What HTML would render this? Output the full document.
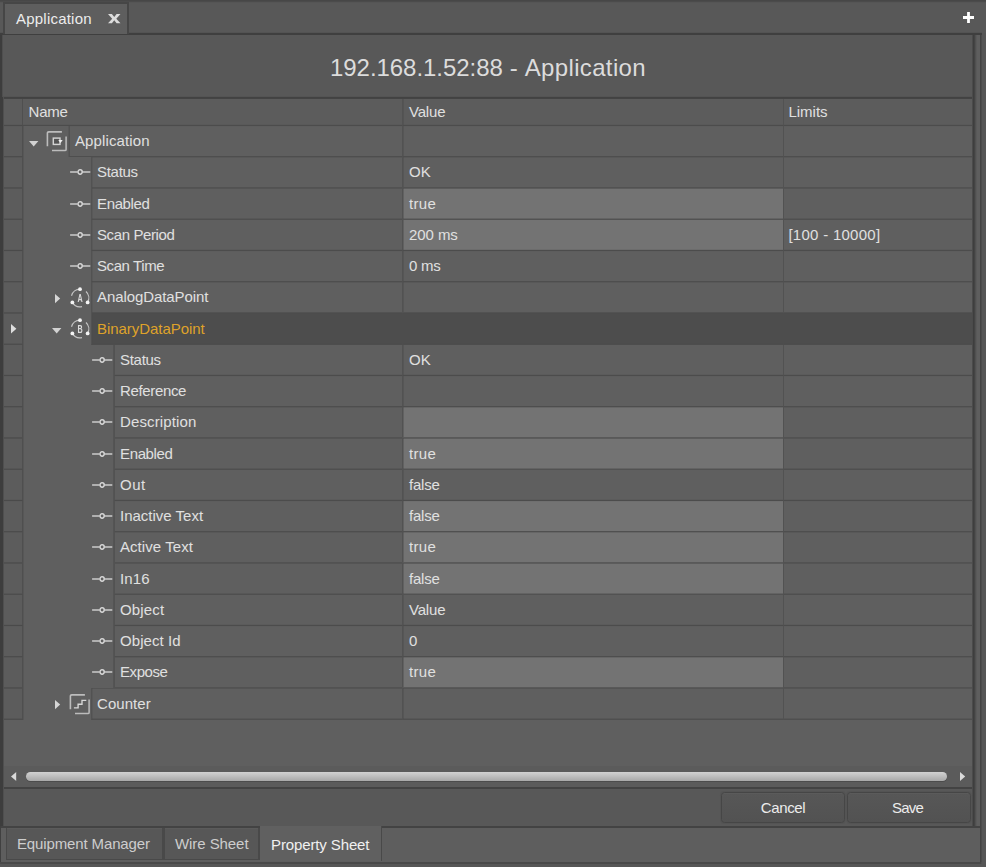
<!DOCTYPE html>
<html lang="en">
<head>
<meta charset="utf-8">
<title>192.168.1.52:88 - Application</title>
<style>
*{box-sizing:border-box;margin:0;padding:0}
html,body{width:986px;height:867px;overflow:hidden;background:#565656}
body{position:relative;font-family:"Liberation Sans",sans-serif;font-size:15px;color:#e0e0e0}
.abs{position:absolute}
#frame{left:0;top:0;width:981px;height:864px;background:#575757;border-right:1px solid #474747;border-bottom:2px solid #494949;box-shadow:1px 0 0 #515151}
#topedge{left:0;top:0;width:986px;height:3px;background:linear-gradient(#474747 33.3%,#4b4b4b 33.3%,#4b4b4b 66.6%,#555 66.6%)}
#tabstrip{left:0;top:0;width:986px;height:33px;background:#585858}
#toptab{left:3px;top:2px;width:126px;height:32px;background:#5e5e5e;border:solid #464646;border-width:2px 2px 0 2px}
#toptab span.t{position:absolute;left:11px;top:6px;font-size:15px;color:#ececec;letter-spacing:.22px}
#plus{left:963px;top:12px;width:11px;height:11px}
#panel{left:0;top:33px;width:975px;height:793px;background:#585858;border-top:2px solid #464646;border-bottom:1px solid #4c4c4c;border-left:2px solid #3d3d3d;border-right:3px solid #474747;}
#topline{left:0;top:32px;width:982px;height:3px;background:linear-gradient(#535353 33.3%,#3f3f3f 33.3%)}
#rstrip{left:972px;top:35px;width:10px;height:827px;background:linear-gradient(90deg,#4b4b4b 0%,#4b4b4b 10%,#3e3e3e 10%,#3e3e3e 20%,#444444 20%,#444444 30%,#505050 30%,#505050 40%,#595959 40%,#595959 50%,#5e5e5e 50%,#5e5e5e 60%,#5e5e5e 60%,#5e5e5e 70%,#5e5e5e 70%,#5e5e5e 80%,#434343 80%,#434343 90%,#4c4c4c 90%,#4c4c4c 100%)}
#title{left:3px;top:36px;width:970px;height:61px;line-height:64px;text-align:center;font-size:24px;color:#dcdcdc;letter-spacing:.05px}
#titleline{left:3px;top:96px;width:969px;height:3px;background:linear-gradient(#545454 33.3%,#424242 33.3%,#424242 66.6%,#444 66.6%)}
#grid{left:3px;top:99px;width:969px;height:667px;background:#5f5f5f;overflow:hidden}
.row{position:absolute;left:0;width:969px;height:31.25px}
.ind{position:absolute;left:0;top:0;width:20px;height:100%;background:#5c5c5c;border-right:1px solid #4f4f4f;border-bottom:1px solid rgba(74,74,74,var(--cb));box-shadow:inset 0 1px 0 rgba(74,74,74,var(--ct)),inset 0 -1px 0 rgba(74,74,74,var(--cc))}
.name{position:absolute;top:0;height:100%;background:#5f5f5f;border-left:1px solid #525252;border-bottom:1px solid rgba(76,76,76,var(--cb));box-shadow:inset 0 1px 0 rgba(76,76,76,var(--ct)),inset 0 -1px 0 rgba(76,76,76,var(--cc));padding-left:5px;line-height:30px;white-space:nowrap;right:570px}
.name::before{content:"";position:absolute;left:calc(var(--vl,0px) * 1 - 1px);top:0;bottom:-1px;width:1px;background:rgba(76,76,76,var(--va,0))}
.hdr .name::before{display:none}
.hdr .name{border-left:none;padding-left:5.6px;letter-spacing:-.27px}
.hdr .val{letter-spacing:-.18px}
.hdr .name,.hdr .val,.hdr .lim{line-height:25px;background:#5c5c5c}
.val{position:absolute;left:399px;top:0;width:381px;height:100%;background:#5f5f5f;border-left:1px solid #525252;border-bottom:1px solid rgba(76,76,76,var(--cb));box-shadow:inset 0 1px 0 rgba(76,76,76,var(--ct)),inset 0 -1px 0 rgba(76,76,76,var(--cc));padding-left:6px;line-height:30px}
.val.ed{background:#737373}
.val::before{content:"";position:absolute;left:0;top:0;bottom:0;width:1px;background:rgba(76,76,76,.45)}
.lim{position:absolute;left:780px;top:0;width:189px;height:100%;background:#5f5f5f;border-left:1px solid #525252;border-bottom:1px solid rgba(76,76,76,var(--cb));box-shadow:inset 0 1px 0 rgba(76,76,76,var(--ct)),inset 0 -1px 0 rgba(76,76,76,var(--cc));padding-left:4.4px;line-height:30px;}
.indent{position:absolute;left:20px;top:0;height:100%;background:#5f5f5f;box-shadow:inset 1px 0 0 rgba(76,76,76,.4)}
.dn .name,.dn .val,.dn .lim{line-height:32px}
.sel .name,.sel .val,.sel .lim{background:#4d4d4d;border-bottom-color:#4d4d4d}
.sel .name{color:#dfa22a}
.sel .val,.sel .lim{border-left-color:#4d4d4d}
.sel .val::before{display:none}
svg{position:absolute;overflow:visible}
#hscroll{left:3px;top:766px;width:969px;height:23px;background:#5b5b5b;border-bottom:2px solid #434343}
#thumb{left:26px;top:772.4px;width:921.3px;height:8.8px;border-radius:4.4px;background:linear-gradient(#d2d2d2,#a8a8a8);box-shadow:0 1px 0 rgba(64,64,64,.55)}
#ledge2{left:0;top:826px;width:1px;height:36px;background:#404040}
#ledge{left:0;top:97px;width:4px;height:729px;background:linear-gradient(90deg,#3d3d3d 75%,#4f4f4f 75%)}
#ledge0{left:0;top:35px;width:3px;height:62px;background:linear-gradient(90deg,#3d3d3d 66.6%,#4f4f4f 66.6%)}
#btnbar{left:3px;top:789px;width:969px;height:37px;background:#585858}
.btn{position:absolute;top:792px;height:31px;border:1px solid #464646;border-radius:3.5px;background:linear-gradient(#575757,#525252);box-shadow:inset 0 1px 0 #5b5b5b,0 0 0 1px rgba(76,76,76,.35);text-align:center;line-height:30px;font-size:15px;color:#ececec}
#bstrip{left:1px;top:826px;width:979px;height:36px;background:#5e5e5e;border-top:2px solid #434343}
.btab{position:absolute;top:828px;height:32px;border:solid #494949;border-width:0 2px 1px 1px;background:#575757;box-shadow:inset 0 1px 0 #5b5b5b;font-size:15px;line-height:31px;color:#cdcdcd;padding-left:10px;white-space:nowrap}
.btab.on{top:826px;height:35px;background:#606060;color:#f0f0f0;border-left:none;border-bottom:none;box-shadow:none;line-height:37px;padding-left:11px;letter-spacing:-.12px}
</style>
</head>
<body>
<div id="frame" class="abs"></div>
<div id="tabstrip" class="abs"></div>
<div id="topedge" class="abs"></div>
<div id="panel" class="abs"></div>
<div id="rstrip" class="abs"></div>
<div id="topline" class="abs"></div>
<div id="toptab" class="abs"><span class="t">Application</span>
<svg style="left:102.8px;top:9.6px" width="12.5" height="9.3" viewBox="0 0 12.5 9.3"><path d="M0 0H3.9L6.25 3L8.6 0H12.5L8.3 4.65L12.5 9.3H8.6L6.25 6.3L3.9 9.3H0L4.2 4.65Z" fill="#dcdcdc"/></svg>
</div>
<svg id="plus" class="abs" viewBox="0 0 11 11"><path d="M5.5 0V11M0 5.5H11" stroke="#fff" stroke-width="2.8" fill="none"/></svg>
<div id="title" class="abs"><span style="letter-spacing:-.05px">192.168.1.52:88</span><span style="letter-spacing:.2px"> - </span><span style="letter-spacing:.35px">Application</span></div>
<div id="titleline" class="abs"></div>
<div id="grid" class="abs">
<div class="row hdr" style="top:0;height:27px;--ct:0;--cb:1;--cc:.15"><div class="ind"></div><div class="name" style="left:20px">Name</div><div class="val">Value</div><div class="lim">Limits</div></div>
<div class="row" style="top:27px;height:31px;--ct:0.10;--cb:0.90;--cc:0.00"><div class="ind"></div><div class="indent" style="width:46px"><svg style="left:6.2px;top:14.9px" width="9.4" height="5.4" viewBox="0 0 9.4 5.4"><path d="M0 0H9.4L4.7 5.4Z" fill="#d2d2d2"/></svg><svg style="left:23px;top:5.1px" width="22" height="21" viewBox="0 0 22 21"><path d="M1.4 15.3V2.2Q1.4 0.85 2.8 0.85H15.9" stroke="#bcbcbc" stroke-width="1.6" fill="none"/><path d="M20.1 5.5V18.4Q20.1 19.5 19 19.5H6" stroke="#bcbcbc" stroke-width="1.5" fill="none"/><rect x="7.3" y="7.1" width="6.7" height="6.3" stroke="#d2d2d2" stroke-width="1.45" fill="#545454"/><path d="M12.3 9.1H16.7L14.5 12.1Z" fill="#f0f0f0"/></svg></div><div class="name" style="left:66px;letter-spacing:0.12px;--vl:-1px;--va:.35">Application</div><div class="val"></div><div class="lim"></div></div>
<div class="row" style="top:58px;height:31px;--ct:0.35;--cb:0.65;--cc:0.00"><div class="ind"></div><div class="indent" style="width:68px"><svg style="left:46.7px;top:11.35px" width="21" height="8" viewBox="0 0 21 8"><path d="M0.1 4H7.4M12.8 4H20.3" stroke="#b0b0b0" stroke-width="1.8" fill="none"/><circle cx="10.1" cy="4" r="2.15" stroke="#d8d8d8" stroke-width="1.5" fill="none"/></svg></div><div class="name" style="left:88px;letter-spacing:-0.29px;--vl:1px;--va:.3">Status</div><div class="val" style="letter-spacing:0.14px">OK</div><div class="lim"></div></div>
<div class="row dn" style="top:89px;height:32px;--ct:0.60;--cb:0.85;--cc:0.40"><div class="ind"></div><div class="indent" style="width:68px"><svg style="left:46.7px;top:11.6px" width="21" height="8" viewBox="0 0 21 8"><path d="M0.1 4H7.4M12.8 4H20.3" stroke="#b0b0b0" stroke-width="1.8" fill="none"/><circle cx="10.1" cy="4" r="2.15" stroke="#d8d8d8" stroke-width="1.5" fill="none"/></svg></div><div class="name" style="left:88px;letter-spacing:-0.36px;--vl:1px;--va:.3">Enabled</div><div class="val ed" style="letter-spacing:0.32px">true</div><div class="lim"></div></div>
<div class="row" style="top:121px;height:31px;--ct:0.00;--cb:1.00;--cc:0.15"><div class="ind"></div><div class="indent" style="width:68px"><svg style="left:46.7px;top:10.85px" width="21" height="8" viewBox="0 0 21 8"><path d="M0.1 4H7.4M12.8 4H20.3" stroke="#b0b0b0" stroke-width="1.8" fill="none"/><circle cx="10.1" cy="4" r="2.15" stroke="#d8d8d8" stroke-width="1.5" fill="none"/></svg></div><div class="name" style="left:88px;letter-spacing:-0.39px;--vl:1px;--va:.3">Scan Period</div><div class="val ed" style="letter-spacing:-0.07px">200 ms</div><div class="lim" style="letter-spacing:0.28px">[100 - 10000]</div></div>
<div class="row" style="top:152px;height:31px;--ct:0.10;--cb:0.90;--cc:0.00"><div class="ind"></div><div class="indent" style="width:68px"><svg style="left:46.7px;top:11.1px" width="21" height="8" viewBox="0 0 21 8"><path d="M0.1 4H7.4M12.8 4H20.3" stroke="#b0b0b0" stroke-width="1.8" fill="none"/><circle cx="10.1" cy="4" r="2.15" stroke="#d8d8d8" stroke-width="1.5" fill="none"/></svg></div><div class="name" style="left:88px;letter-spacing:-0.41px;--vl:1px;--va:.3">Scan Time</div><div class="val" style="letter-spacing:-0.28px">0 ms</div><div class="lim"></div></div>
<div class="row" style="top:183px;height:31px;--ct:0.35;--cb:0.65;--cc:0.00"><div class="ind"></div><div class="indent" style="width:68px"><svg style="left:31.6px;top:11.75px" width="5.2" height="9.2" viewBox="0 0 5.2 9.2"><path d="M0 0V9.2L5.2 4.6Z" fill="#d6d6d6"/></svg><svg style="left:45.75px;top:4.75px" width="22" height="22" viewBox="0 0 22 22"><path d="M11.00 2.20A8.8 8.8 0 0 0 2.50 8.72M3.38 15.40A8.8 8.8 0 0 0 12.98 19.57M18.62 15.40A8.8 8.8 0 0 0 17.00 4.56" stroke="#c4c4c4" stroke-width="1.2" fill="none"/><circle cx="11.00" cy="2.20" r="1.9" fill="#f4f4f4"/><circle cx="3.38" cy="15.40" r="1.9" fill="#f4f4f4"/><circle cx="18.62" cy="15.40" r="1.9" fill="#f4f4f4"/><text transform="translate(11 14.7) scale(.72 1)" text-anchor="middle" font-family="Liberation Sans, sans-serif" font-size="10" font-weight="bold" fill="#dcdcdc" style="filter:grayscale(1)">A</text></svg></div><div class="name" style="left:88px;letter-spacing:-0.09px;--vl:1px;--va:.3">AnalogDataPoint</div><div class="val"></div><div class="lim"></div></div>
<div class="row sel dn" style="top:214px;height:32px;--ct:0.60;--cb:0.85;--cc:0.40"><div class="ind"><svg style="left:7.8px;top:10.8px" width="5.4" height="9.6" viewBox="0 0 5.4 9.6"><path d="M0 0V9.6L5.4 4.8Z" fill="#dedede"/></svg></div><div class="indent" style="width:68px"><svg style="left:28.7px;top:15.4px" width="9.4" height="5.4" viewBox="0 0 9.4 5.4"><path d="M0 0H9.4L4.7 5.4Z" fill="#d2d2d2"/></svg><svg style="left:45.75px;top:5px" width="22" height="22" viewBox="0 0 22 22"><path d="M11.00 2.20A8.8 8.8 0 0 0 2.50 8.72M3.38 15.40A8.8 8.8 0 0 0 12.98 19.57M18.62 15.40A8.8 8.8 0 0 0 17.00 4.56" stroke="#c4c4c4" stroke-width="1.2" fill="none"/><circle cx="11.00" cy="2.20" r="1.9" fill="#f4f4f4"/><circle cx="3.38" cy="15.40" r="1.9" fill="#f4f4f4"/><circle cx="18.62" cy="15.40" r="1.9" fill="#f4f4f4"/><text transform="translate(11 14.7) scale(.72 1)" text-anchor="middle" font-family="Liberation Sans, sans-serif" font-size="10" font-weight="bold" fill="#dcdcdc" style="filter:grayscale(1)">B</text></svg></div><div class="name" style="left:88px;letter-spacing:-0.05px;--vl:1px;--va:.3">BinaryDataPoint</div><div class="val"></div><div class="lim"></div></div>
<div class="row" style="top:246px;height:31px;--ct:0.00;--cb:1.00;--cc:0.15"><div class="ind"></div><div class="indent" style="width:91px"><svg style="left:69.2px;top:10.85px" width="21" height="8" viewBox="0 0 21 8"><path d="M0.1 4H7.4M12.8 4H20.3" stroke="#b0b0b0" stroke-width="1.8" fill="none"/><circle cx="10.1" cy="4" r="2.15" stroke="#d8d8d8" stroke-width="1.5" fill="none"/></svg></div><div class="name" style="left:111px;letter-spacing:-0.29px;--vl:-1px;--va:.6">Status</div><div class="val" style="letter-spacing:0.14px">OK</div><div class="lim"></div></div>
<div class="row" style="top:277px;height:31px;--ct:0.10;--cb:0.90;--cc:0.00"><div class="ind"></div><div class="indent" style="width:91px"><svg style="left:69.2px;top:11.1px" width="21" height="8" viewBox="0 0 21 8"><path d="M0.1 4H7.4M12.8 4H20.3" stroke="#b0b0b0" stroke-width="1.8" fill="none"/><circle cx="10.1" cy="4" r="2.15" stroke="#d8d8d8" stroke-width="1.5" fill="none"/></svg></div><div class="name" style="left:111px;letter-spacing:-0.35px;--vl:-1px;--va:.6">Reference</div><div class="val"></div><div class="lim"></div></div>
<div class="row" style="top:308px;height:31px;--ct:0.35;--cb:0.65;--cc:0.00"><div class="ind"></div><div class="indent" style="width:91px"><svg style="left:69.2px;top:11.35px" width="21" height="8" viewBox="0 0 21 8"><path d="M0.1 4H7.4M12.8 4H20.3" stroke="#b0b0b0" stroke-width="1.8" fill="none"/><circle cx="10.1" cy="4" r="2.15" stroke="#d8d8d8" stroke-width="1.5" fill="none"/></svg></div><div class="name" style="left:111px;letter-spacing:0.12px;--vl:-1px;--va:.6">Description</div><div class="val ed"></div><div class="lim"></div></div>
<div class="row dn" style="top:339px;height:32px;--ct:0.60;--cb:0.85;--cc:0.40"><div class="ind"></div><div class="indent" style="width:91px"><svg style="left:69.2px;top:11.6px" width="21" height="8" viewBox="0 0 21 8"><path d="M0.1 4H7.4M12.8 4H20.3" stroke="#b0b0b0" stroke-width="1.8" fill="none"/><circle cx="10.1" cy="4" r="2.15" stroke="#d8d8d8" stroke-width="1.5" fill="none"/></svg></div><div class="name" style="left:111px;letter-spacing:-0.36px;--vl:-1px;--va:.6">Enabled</div><div class="val ed" style="letter-spacing:0.32px">true</div><div class="lim"></div></div>
<div class="row" style="top:371px;height:31px;--ct:0.00;--cb:1.00;--cc:0.15"><div class="ind"></div><div class="indent" style="width:91px"><svg style="left:69.2px;top:10.85px" width="21" height="8" viewBox="0 0 21 8"><path d="M0.1 4H7.4M12.8 4H20.3" stroke="#b0b0b0" stroke-width="1.8" fill="none"/><circle cx="10.1" cy="4" r="2.15" stroke="#d8d8d8" stroke-width="1.5" fill="none"/></svg></div><div class="name" style="left:111px;letter-spacing:0.49px;--vl:-1px;--va:.6">Out</div><div class="val" style="letter-spacing:-0.21px">false</div><div class="lim"></div></div>
<div class="row" style="top:402px;height:31px;--ct:0.10;--cb:0.90;--cc:0.00"><div class="ind"></div><div class="indent" style="width:91px"><svg style="left:69.2px;top:11.1px" width="21" height="8" viewBox="0 0 21 8"><path d="M0.1 4H7.4M12.8 4H20.3" stroke="#b0b0b0" stroke-width="1.8" fill="none"/><circle cx="10.1" cy="4" r="2.15" stroke="#d8d8d8" stroke-width="1.5" fill="none"/></svg></div><div class="name" style="left:111px;;--vl:-1px;--va:.6">Inactive Text</div><div class="val ed" style="letter-spacing:-0.21px">false</div><div class="lim"></div></div>
<div class="row" style="top:433px;height:31px;--ct:0.35;--cb:0.65;--cc:0.00"><div class="ind"></div><div class="indent" style="width:91px"><svg style="left:69.2px;top:11.35px" width="21" height="8" viewBox="0 0 21 8"><path d="M0.1 4H7.4M12.8 4H20.3" stroke="#b0b0b0" stroke-width="1.8" fill="none"/><circle cx="10.1" cy="4" r="2.15" stroke="#d8d8d8" stroke-width="1.5" fill="none"/></svg></div><div class="name" style="left:111px;letter-spacing:0.06px;--vl:-1px;--va:.6">Active Text</div><div class="val ed" style="letter-spacing:0.32px">true</div><div class="lim"></div></div>
<div class="row dn" style="top:464px;height:32px;--ct:0.60;--cb:0.85;--cc:0.40"><div class="ind"></div><div class="indent" style="width:91px"><svg style="left:69.2px;top:11.6px" width="21" height="8" viewBox="0 0 21 8"><path d="M0.1 4H7.4M12.8 4H20.3" stroke="#b0b0b0" stroke-width="1.8" fill="none"/><circle cx="10.1" cy="4" r="2.15" stroke="#d8d8d8" stroke-width="1.5" fill="none"/></svg></div><div class="name" style="left:111px;letter-spacing:0.17px;--vl:-1px;--va:.6">In16</div><div class="val ed" style="letter-spacing:-0.21px">false</div><div class="lim"></div></div>
<div class="row" style="top:496px;height:31px;--ct:0.00;--cb:1.00;--cc:0.15"><div class="ind"></div><div class="indent" style="width:91px"><svg style="left:69.2px;top:10.85px" width="21" height="8" viewBox="0 0 21 8"><path d="M0.1 4H7.4M12.8 4H20.3" stroke="#b0b0b0" stroke-width="1.8" fill="none"/><circle cx="10.1" cy="4" r="2.15" stroke="#d8d8d8" stroke-width="1.5" fill="none"/></svg></div><div class="name" style="left:111px;letter-spacing:0.16px;--vl:-1px;--va:.6">Object</div><div class="val" style="letter-spacing:-0.18px">Value</div><div class="lim"></div></div>
<div class="row" style="top:527px;height:31px;--ct:0.10;--cb:0.90;--cc:0.00"><div class="ind"></div><div class="indent" style="width:91px"><svg style="left:69.2px;top:11.1px" width="21" height="8" viewBox="0 0 21 8"><path d="M0.1 4H7.4M12.8 4H20.3" stroke="#b0b0b0" stroke-width="1.8" fill="none"/><circle cx="10.1" cy="4" r="2.15" stroke="#d8d8d8" stroke-width="1.5" fill="none"/></svg></div><div class="name" style="left:111px;letter-spacing:0.06px;--vl:-1px;--va:.6">Object Id</div><div class="val" style="letter-spacing:0.36px">0</div><div class="lim"></div></div>
<div class="row" style="top:558px;height:31px;--ct:0.35;--cb:0.65;--cc:0.00"><div class="ind"></div><div class="indent" style="width:91px"><svg style="left:69.2px;top:11.35px" width="21" height="8" viewBox="0 0 21 8"><path d="M0.1 4H7.4M12.8 4H20.3" stroke="#b0b0b0" stroke-width="1.8" fill="none"/><circle cx="10.1" cy="4" r="2.15" stroke="#d8d8d8" stroke-width="1.5" fill="none"/></svg></div><div class="name" style="left:111px;letter-spacing:-0.43px;--vl:-1px;--va:.6">Expose</div><div class="val ed" style="letter-spacing:0.32px">true</div><div class="lim"></div></div>
<div class="row dn" style="top:589px;height:32px;--ct:0.60;--cb:0.85;--cc:0.40"><div class="ind"></div><div class="indent" style="width:68px"><svg style="left:31.6px;top:12px" width="5.2" height="9.2" viewBox="0 0 5.2 9.2"><path d="M0 0V9.2L5.2 4.6Z" fill="#d6d6d6"/></svg><svg style="left:45.5px;top:5.6px" width="22" height="21" viewBox="0 0 22 21"><path d="M1.4 15.3V2.2Q1.4 0.85 2.8 0.85H15.9" stroke="#bcbcbc" stroke-width="1.6" fill="none"/><path d="M20.1 5.5V18.4Q20.1 19.5 19 19.5H6" stroke="#bcbcbc" stroke-width="1.5" fill="none"/><path d="M4.9 13.9H9.1V10.2H13V6.4H17.3" stroke="#d8d8d8" stroke-width="1.35" fill="none"/></svg></div><div class="name" style="left:88px;letter-spacing:0.05px;--vl:1px;--va:.3">Counter</div><div class="val"></div><div class="lim"></div></div>
</div>
<div id="hscroll" class="abs"></div>
<div id="thumb" class="abs"></div>
<svg class="abs" style="left:11px;top:772.3px" width="5.2" height="9" viewBox="0 0 5.2 9"><path d="M5.2 0V9L0 4.5Z" fill="#dadada"/></svg>
<svg class="abs" style="left:959.6px;top:772.3px" width="5.2" height="9" viewBox="0 0 5.2 9"><path d="M0 0V9L5.2 4.5Z" fill="#dadada"/></svg>
<div id="btnbar" class="abs"></div>
<div class="btn" style="left:721px;width:124px;letter-spacing:-.39px">Cancel</div>
<div class="btn" style="left:847px;width:124px;letter-spacing:-.85px;padding-right:3px">Save</div>
<div id="ledge" class="abs"></div><div id="ledge0" class="abs"></div><div id="ledge2" class="abs"></div>
<div id="bstrip" class="abs"></div>
<div class="btab" style="left:6px;width:158px;letter-spacing:-.13px">Equipment Manager</div>
<div class="btab" style="left:164px;width:96px;letter-spacing:-.07px">Wire Sheet</div>
<div class="btab on" style="left:260px;width:122px;border-right-width:1px">Property Sheet</div>
</body>
</html>
